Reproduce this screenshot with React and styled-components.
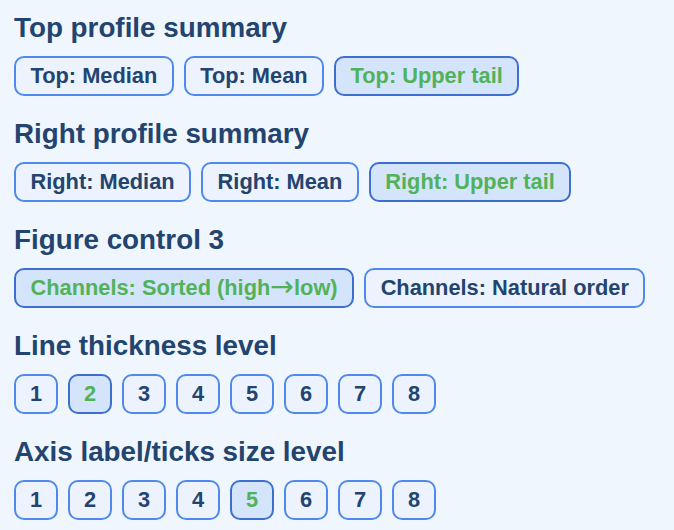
import { useState } from "react";
import styled, { createGlobalStyle } from "styled-components";

const GlobalStyle = createGlobalStyle`
  html, body {
    margin: 0;
    padding: 0;
    background: #f0f6fe;
  }
  body {
    font-family: "Liberation Sans", Arial, sans-serif;
  }
`;

const Page = styled.div`
  width: 674px;
  height: 530px;
  box-sizing: border-box;
  padding: 12px 14px;
  background: #f0f6fe;
  overflow: hidden;
`;

const Section = styled.section`
  margin-bottom: 22px;
`;

const Title = styled.h2`
  margin: 0 0 12px;
  font-size: 27.8px;
  line-height: 32px;
  font-weight: 700;
  color: #23446e;
`;

const Row = styled.div`
  display: flex;
  flex-wrap: wrap;
  gap: 10px;
`;

const Option = styled.button`
  height: 40px;
  padding: 0 ${(p) => (p.$square ? "0" : "14.5px")};
  width: ${(p) => (p.$square ? "44px" : "auto")};
  box-sizing: border-box;
  border-radius: 10px;
  border: 2px solid ${(p) => (p.$active ? "#3e6fd0" : "#5089ec")};
  background: ${(p) => (p.$active ? "#d4e4fb" : "#ecf3fe")};
  color: ${(p) => (p.$active ? "#52b25a" : "#23446e")};
  font-family: "Liberation Sans", Arial, sans-serif;
  font-size: 21.8px;
  font-weight: 700;
  line-height: 36px;
  cursor: pointer;
`;

const Arrow = styled.span`
  font-family: "DejaVu Sans", sans-serif;
  font-weight: 400;
  font-size: 1.3em;
  line-height: 1;
  vertical-align: -1px;
`;

const groups = [
  {
    title: "Top profile summary",
    options: ["Top: Median", "Top: Mean", "Top: Upper tail"],
    active: 2,
  },
  {
    title: "Right profile summary",
    options: ["Right: Median", "Right: Mean", "Right: Upper tail"],
    active: 2,
  },
  {
    title: "Figure control 3",
    options: ["Channels: Sorted (high→low)", "Channels: Natural order"],
    active: 0,
  },
  {
    title: "Line thickness level",
    options: ["1", "2", "3", "4", "5", "6", "7", "8"],
    active: 1,
    square: true,
  },
  {
    title: "Axis label/ticks size level",
    options: ["1", "2", "3", "4", "5", "6", "7", "8"],
    active: 4,
    square: true,
  },
];

function renderLabel(label) {
  const parts = label.split("→");
  if (parts.length === 1) return label;
  return (
    <>
      {parts[0]}
      <Arrow>→</Arrow>
      {parts[1]}
    </>
  );
}

function Group({ group }) {
  const [active, setActive] = useState(group.active);
  return (
    <Section>
      <Title>{group.title}</Title>
      <Row>
        {group.options.map((label, i) => (
          <Option
            key={label}
            $active={i === active}
            $square={group.square}
            onClick={() => setActive(i)}
          >
            {renderLabel(label)}
          </Option>
        ))}
      </Row>
    </Section>
  );
}

export default function App() {
  return (
    <>
      <GlobalStyle />
      <Page>
        {groups.map((g) => (
          <Group key={g.title} group={g} />
        ))}
      </Page>
    </>
  );
}
